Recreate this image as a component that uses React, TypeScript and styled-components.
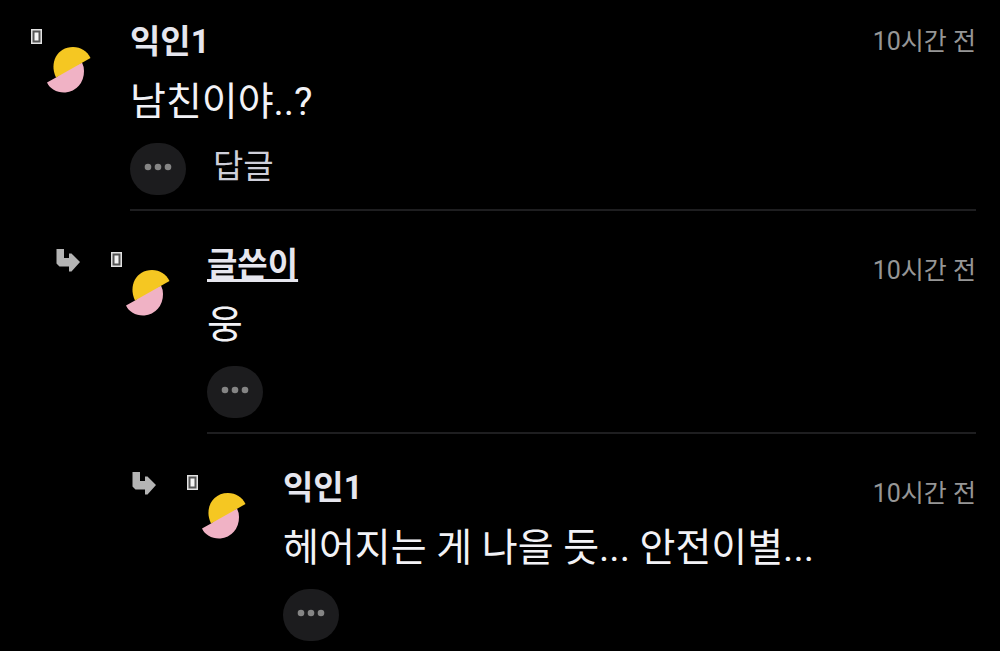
import React from 'react';
import styled, { createGlobalStyle } from 'styled-components';

const GlobalStyle = createGlobalStyle`
  html, body { margin: 0; background: #000; }
  body {
    color: #ededf2;
    font-family: Roboto, 'Noto Sans CJK KR', sans-serif;
  }
`;

const Thread = styled.main`
  padding-right: 24px;
`;

const Comment = styled.article<{ $indent: number }>`
  display: flex;
  align-items: flex-start;
  padding-left: ${(p) => p.$indent}px;
`;

const Markers = styled.div<{ $reply: boolean; $first: boolean }>`
  display: flex;
  flex: none;
  align-items: flex-start;
  box-sizing: border-box;
  width: ${(p) => (p.$reply ? 151 : 99)}px;
  padding-top: ${(p) => (p.$first ? 29 : 37)}px;
`;

const ReplyArrow = styled.svg`
  flex: none;
  width: 24px;
  height: 24px;
  margin-right: 31px;
`;

const Badge = styled.svg<{ $reply: boolean }>`
  flex: none;
  width: 11px;
  height: 15px;
  margin-top: ${(p) => (p.$reply ? 4 : 0)}px;
`;

const Avatar = styled.svg<{ $reply: boolean }>`
  flex: none;
  width: 44px;
  height: 46px;
  margin-left: ${(p) => (p.$reply ? 4 : 5)}px;
  margin-top: ${(p) => (p.$reply ? 22 : 18)}px;
`;

const Content = styled.div<{ $first: boolean; $last: boolean }>`
  flex: 1;
  min-width: 0;
  padding-top: ${(p) => (p.$first ? 18 : 30)}px;
  padding-bottom: ${(p) => (p.$last ? 8 : 14)}px;
  border-bottom: ${(p) => (p.$last ? '0' : '2px solid #1e1e20')};
`;

const Header = styled.header`
  display: flex;
  align-items: center;
  justify-content: space-between;
  height: 48px;
`;

const Name = styled.h2<{ $author: boolean }>`
  margin: 0;
  font-size: 33px;
  line-height: 48px;
  font-weight: 700;
  color: #e6e6ee;
  text-decoration: ${(p) => (p.$author ? 'underline' : 'none')};
  text-decoration-thickness: 3px;
  text-underline-offset: 3px;
  text-decoration-skip-ink: none;
`;

const Time = styled.time<{ $first: boolean }>`
  font-size: 25px;
  line-height: 32px;
  color: #969696;
  padding-top: ${(p) => (p.$first ? 0 : 12)}px;
`;

const Body = styled.p`
  margin: 8px 0 13px;
  font-size: 39px;
  line-height: 56px;
  color: #f2f2f6;
`;

const Actions = styled.div`
  display: flex;
  align-items: center;
  gap: 27px;
  height: 52px;
`;

const MoreButton = styled.button`
  display: flex;
  align-items: center;
  justify-content: center;
  width: 56px;
  height: 52px;
  padding: 0 0 4px;
  border: 0;
  border-radius: 26px;
  background: #1c1c1e;
  cursor: pointer;
`;

const ReplyButton = styled.button`
  padding: 0 0 4px;
  border: 0;
  background: none;
  font-family: inherit;
  font-size: 33px;
  line-height: 48px;
  color: #cfcfda;
  cursor: pointer;
`;

type Entry = {
  name: string;
  author?: boolean;
  text: string;
  indent: number;
  canReply?: boolean;
};

const entries: Entry[] = [
  { name: '익인1', text: '남친이야..?', indent: 31, canReply: true },
  { name: '글쓴이', author: true, text: '웅', indent: 56 },
  { name: '익인1', text: '헤어지는 게 나을 듯... 안전이별...', indent: 132 },
];

export default function App() {
  return (
    <Thread>
      <GlobalStyle />
      {entries.map((entry, i) => {
        const first = i === 0;
        return (
          <Comment key={i} $indent={entry.indent}>
            <Markers $reply={!first} $first={first}>
              {!first && (
                <ReplyArrow viewBox="0 0 24 24" aria-hidden="true">
                  <path
                    d="M0.500 1H8V10H13V5.500H15.500L24 14L15.500 23.500H13V18.500H3.500L0.500 15.500Z"
                    fill="#b4b4b4"
                  />
                </ReplyArrow>
              )}
              <Badge $reply={!first} viewBox="0 0 11 15" aria-hidden="true">
                <rect width="11" height="15" fill="#e2e2e2" />
                <rect x="1.5" y="1.5" width="8" height="12" fill="#555" />
                <rect x="3.5" y="3.5" width="4" height="8" fill="#f4f4f4" />
              </Badge>
              <Avatar $reply={!first} viewBox="0 0 44 46" aria-hidden="true">
                <path d="M0 35.5L9 30.4L20 22L35 15.5A19 19 0 0 1 37 24A19.5 21 0 0 1 18.5 45.500C10 46 3 42 0 35.5Z" fill="#f0b2c5" />
                <path d="M9 30.5C2 16 10 0 26 0C34 0 40 4 43.5 11Z" fill="#f5c722" />
              </Avatar>
            </Markers>
            <Content $first={first} $last={i === entries.length - 1}>
              <Header>
                <Name $author={!!entry.author}>{entry.name}</Name>
                <Time $first={first}>10시간 전</Time>
              </Header>
              <Body>{entry.text}</Body>
              <Actions>
                <MoreButton type="button" aria-label="더보기">
                  <svg width="28" height="8" viewBox="0 0 28 8" fill="#858585" aria-hidden="true">
                    <circle cx="4" cy="4" r="3.3" />
                    <circle cx="14" cy="4" r="3.3" />
                    <circle cx="24" cy="4" r="3.3" />
                  </svg>
                </MoreButton>
                {entry.canReply && <ReplyButton type="button">답글</ReplyButton>}
              </Actions>
            </Content>
          </Comment>
        );
      })}
    </Thread>
  );
}
